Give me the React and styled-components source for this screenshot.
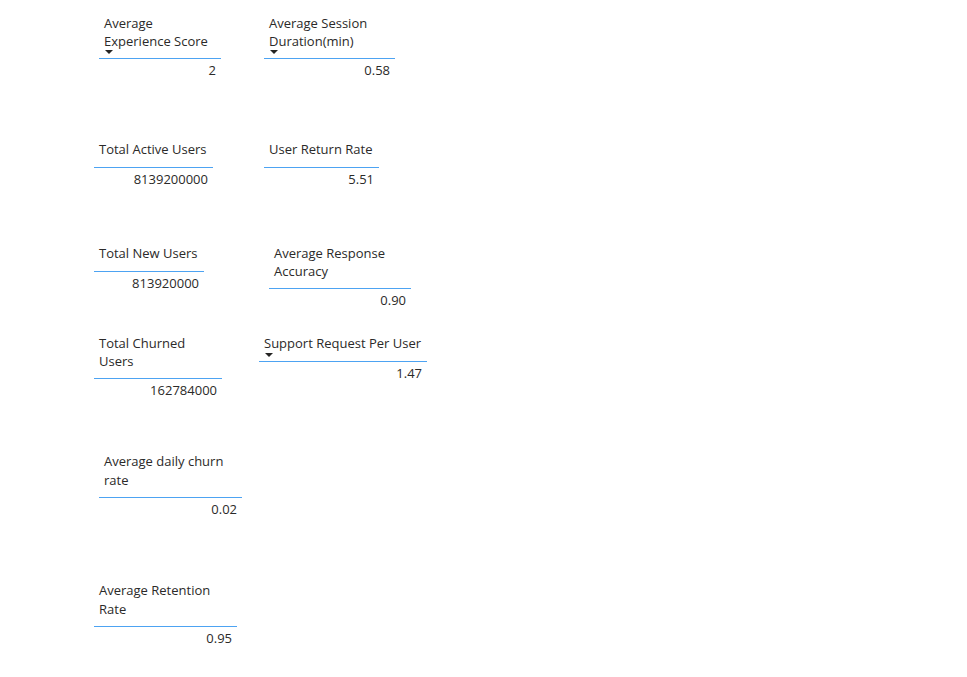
import React from "react";
import styled, { createGlobalStyle } from "styled-components";

const Global = createGlobalStyle`
  html, body { margin: 0; padding: 0; background: #ffffff; }
  body { font-family: "Open Sans", "Noto Sans", sans-serif; }
`;

const Canvas = styled.div`
  width: 967px;
  height: 677px;
  box-sizing: border-box;
  padding: 14px 0 0 94px;
  display: flex;
  flex-direction: column;
  background: #ffffff;
  overflow: hidden;
`;

const Row = styled.div`
  display: flex;
  align-items: flex-start;
  height: ${(p) => p.$h}px;
  flex-shrink: 0;
`;

const Slot = styled.div`
  width: ${(p) => p.$w || 165}px;
  flex-shrink: 0;
  display: flex;
  align-items: flex-start;
`;

const Card = styled.div`
  margin-left: ${(p) => p.$offset || 0}px;
  width: ${(p) => p.$w}px;
  color: #2b2a29;
  font-size: 13px;
`;

const Header = styled.div`
  position: relative;
  padding: 0 5px ${(p) => p.$pb}px;
  line-height: ${(p) => p.$lh}px;
  border-bottom: 1px solid #4da3f2;
  white-space: nowrap;
`;

const Arrow = styled.span`
  position: absolute;
  left: 6px;
  bottom: 4px;
  width: 0;
  height: 0;
  border-left: 4px solid transparent;
  border-right: 4px solid transparent;
  border-top: 4px solid #252423;
`;

const Value = styled.div`
  padding: 2px 5px 0;
  line-height: 18px;
  text-align: right;
`;

function Metric({ w, offset, lines, value, sort, lh = 18 }) {
  const single = lines.length === 1;
  const pb = single ? 9 : lh === 18 ? 8 : 7;
  return (
    <Card $w={w} $offset={offset}>
      <Header $lh={lh} $pb={pb}>
        {lines.map((l, i) => (
          <div key={i}>{l}</div>
        ))}
        {sort && <Arrow />}
      </Header>
      <Value>{value}</Value>
    </Card>
  );
}

const rows = [
  {
    h: 126,
    cards: [
      { w: 122, offset: 5, lines: ["Average", "Experience Score"], value: "2", sort: true },
      { w: 131, offset: 5, lines: ["Average Session", "Duration(min)"], value: "0.58", sort: true },
    ],
  },
  {
    h: 104,
    cards: [
      { w: 119, offset: 0, lines: ["Total Active Users"], value: "8139200000" },
      { w: 115, offset: 5, lines: ["User Return Rate"], value: "5.51" },
    ],
  },
  {
    h: 90,
    cards: [
      { w: 110, offset: 0, lines: ["Total New Users"], value: "813920000" },
      { w: 142, offset: 10, lines: ["Average Response", "Accuracy"], value: "0.90" },
    ],
  },
  {
    h: 118,
    cards: [
      { w: 128, offset: 0, lines: ["Total Churned", "Users"], value: "162784000" },
      { w: 168, offset: 0, lines: ["Support Request Per User"], value: "1.47", sort: true },
    ],
  },
  {
    h: 129,
    cards: [{ w: 143, offset: 5, lh: 19, lines: ["Average daily churn", "rate"], value: "0.02" }],
  },
  {
    h: 90,
    cards: [{ w: 143, offset: 0, lh: 19, lines: ["Average Retention", "Rate"], value: "0.95" }],
  },
];

export default function App() {
  return (
    <>
      <Global />
      <Canvas>
        {rows.map((r, i) => (
          <Row key={i} $h={r.h}>
            {r.cards.map((c, j) => (
              <Slot key={j} $w={j === 0 ? 165 : 300}>
                <Metric {...c} />
              </Slot>
            ))}
          </Row>
        ))}
      </Canvas>
    </>
  );
}
